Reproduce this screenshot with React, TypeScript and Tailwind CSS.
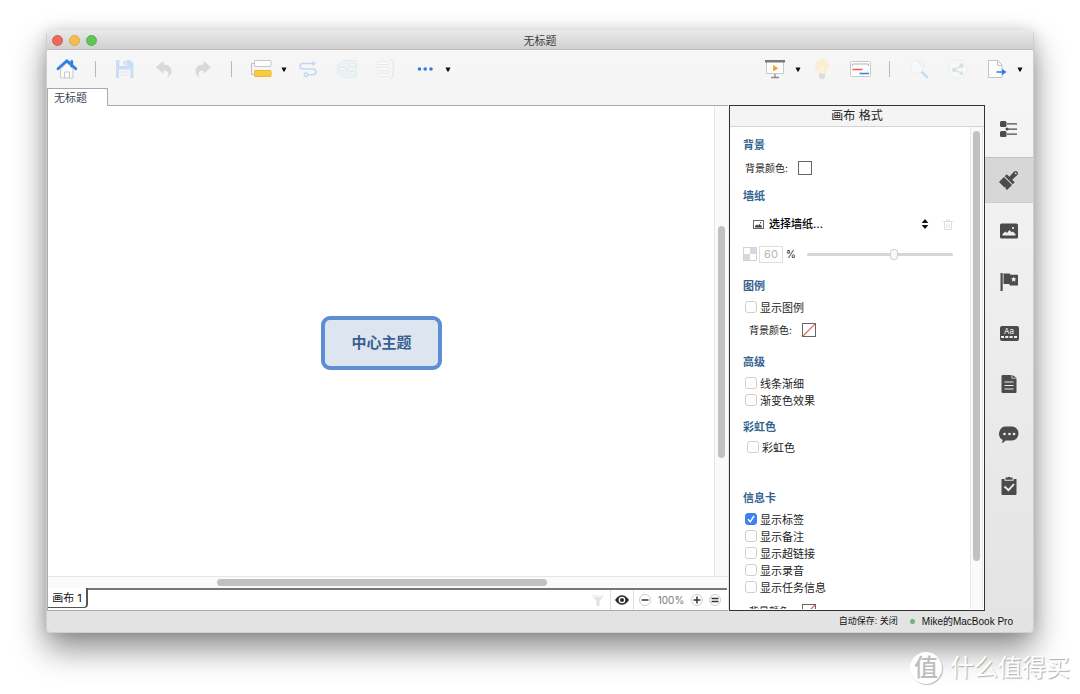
import React from 'react';

const Caret = () => (
  <svg viewBox="0 0 8 8" className="w-2 h-2" fill="#111">
    <path d="M1.500 2.500h5L4.600 6.500H3.400z" />
  </svg>
);

const HomeIcon = () => (
  <svg viewBox="0 0 22 22" className="w-[22px] h-[22px]" fill="none">
    <path d="M4.500 11v9h12.500v-9L10.800 5z" fill="#fafafa" stroke="#c9c9c9" />
    <path d="M8.500 20v-6h5v6" stroke="#c9c9c9" />
    <path d="M2 10.800L10.900 2.800L19.800 10.800M15.800 3.500v4.500" stroke="#2f7fe6" strokeWidth="2.800" strokeLinecap="round" strokeLinejoin="round" />
  </svg>
);

const SaveIcon = () => (
  <svg viewBox="0 0 20 20" className="w-5 h-5">
    <path d="M1 1h14l3.500 3.500V19H1z" fill="#cbddf4" />
    <path d="M4.500 1h7v6h-7z" fill="#f4f6f9" />
    <path d="M8.500 2h2v4h-2z" fill="#cbddf4" />
    <path d="M4 10.500h11.500V19H4z" fill="#f4f6f9" />
    <path d="M5 13h9M5 16h9" stroke="#dfe6ef" />
  </svg>
);

const UndoIcon = ({ flip = false }) => (
  <svg viewBox="0 0 20 20" className={flip ? 'w-5 h-5 -scale-x-100' : 'w-5 h-5'} fill="#d9d9d9">
    <path d="M2 8.200L9.500 1.800v3.800c4.800.1 8 2.600 8 6.600 0 2.700-1.600 4.800-4.500 6.300 1.200-1.500 1.700-3 1.300-4.700-.5-1.700-2.200-2.500-4.800-2.600v3.500z" />
  </svg>
);

const TopicIcon = () => (
  <svg viewBox="0 0 22 20" className="w-[22px] h-5" fill="none">
    <path d="M5 4.500H1.500V15.500H5" stroke="#bdbdbd" />
    <rect x="4.500" y="1.500" width="16.500" height="6" rx="0.500" fill="#fdfdfd" stroke="#c6c6c6" />
    <rect x="4.500" y="11.500" width="16.500" height="6" rx="0.500" fill="#fbcb3f" stroke="#e9ba3c" />
  </svg>
);

const RelationIcon = () => (
  <svg viewBox="0 0 20 20" className="w-5 h-5" fill="none" stroke="#c5d8f3" strokeWidth="1.500">
    <path d="M15 4.500H4.800a2.800 2.800 0 0 0 0 5.600h10.400a2.800 2.800 0 0 1 0 5.700H10" />
    <path d="M14.500 2.500L18 4.500l-3.500 2z" fill="#c5d8f3" strokeWidth="0.500" />
    <circle cx="8" cy="15.800" r="1.800" />
  </svg>
);

const BoundaryIcon = () => (
  <svg viewBox="0 0 22 20" className="w-[22px] h-5" fill="none">
    <path d="M1.500 5.500L8 1.500H20.500V18.500H8L1.500 14.500z" fill="#edf2f8" stroke="#e4ebf4" />
    <path d="M9.500 10h2l2-4H14M11.500 10l2 4H14" stroke="#dfebdf" />
    <rect x="4" y="8.500" width="5.500" height="3" rx="1" fill="#f5f8f5" stroke="#dfebdf" />
    <rect x="14" y="4.500" width="4.500" height="3" rx="1" fill="#f5f8f5" stroke="#dfebdf" />
    <rect x="14" y="12.500" width="4.500" height="3" rx="1" fill="#f5f8f5" stroke="#dfebdf" />
  </svg>
);

const SummaryIcon = () => (
  <svg viewBox="0 0 20 20" className="w-5 h-5" fill="#fafafa" stroke="#ebebeb">
    <rect x="1" y="2.500" width="12" height="3" rx="1" />
    <rect x="1" y="8.500" width="12" height="3" rx="1" />
    <rect x="1" y="14.500" width="12" height="3" rx="1" />
    <path d="M14 1h1.500q1.500 0 1.500 1.500V8q0 1.500 2 2q-2 .5-2 2v5.500q0 1.500-1.500 1.500H14" fill="none" stroke="#dae7da" />
  </svg>
);

const DotsIcon = () => (
  <svg viewBox="0 0 20 20" className="w-5 h-5" fill="#2f7de1">
    <circle cx="4.500" cy="10" r="1.800" />
    <circle cx="10.200" cy="10" r="1.800" />
    <circle cx="16" cy="10" r="1.800" />
  </svg>
);

const PresentIcon = () => (
  <svg viewBox="0 0 20 20" className="w-5 h-5" fill="none">
    <path d="M1.500 3v11.500h17V3" fill="#fdfdfd" stroke="#c8c8c8" />
    <path d="M0 1h20v2.500H0z" fill="#7a7a7a" />
    <path d="M8.200 6v6.500l5-3.200z" fill="#f2a02c" />
    <path d="M10 15v3M6 18.500h8" stroke="#8a8a8a" strokeWidth="1.300" />
  </svg>
);

const BulbIcon = () => (
  <svg viewBox="0 0 20 22" className="w-5 h-[22px]">
    <path d="M10 1a7 7 0 0 0-7 7c0 3.200 3 4.500 3.800 7.500h6.400C14 12.500 17 11.200 17 8a7 7 0 0 0-7-7z" fill="#faefd2" />
    <path d="M9 15V9M11 15V9" stroke="#fdf7e6" />
    <path d="M6.800 15.500h6.400v3.500L11.500 21h-3l-1.700-2z" fill="#dddddb" />
  </svg>
);

const GanttIcon = () => (
  <svg viewBox="0 0 22 20" className="w-[22px] h-5" fill="none">
    <rect x="0.500" y="2.500" width="20" height="15" rx="1" fill="#fdfdfd" stroke="#c9c9c9" />
    <path d="M2.500 7V5h16v2" stroke="#b5b5b5" />
    <path d="M2.500 10.500h10" stroke="#ee5b4c" strokeWidth="1.600" />
    <path d="M9.500 14.500h9.500" stroke="#2f7ff0" strokeWidth="1.600" />
  </svg>
);

const SearchIcon = () => (
  <svg viewBox="0 0 20 20" className="w-5 h-5" fill="none">
    <circle cx="8" cy="8" r="6.700" fill="#f8f9fa" stroke="#e9ebee" />
    <path d="M8 3.500a4.500 4.500 0 0 1 4.500 4.500" stroke="#e9ebee" />
    <path d="M13.500 13.500l4.500 4.700" stroke="#c3dbf8" strokeWidth="2.400" strokeLinecap="round" />
  </svg>
);

const ShareIcon = () => (
  <svg viewBox="0 0 20 20" className="w-5 h-5" fill="none">
    <circle cx="10" cy="10" r="9.300" fill="#f8f8f8" stroke="#ececec" />
    <path d="M13.500 6.500L6.500 11l7 3" stroke="#d3e5d3" strokeWidth="1.200" />
    <g fill="#d3e5d3">
      <circle cx="13.500" cy="6.500" r="2.300" />
      <circle cx="6.300" cy="11" r="2.300" />
      <circle cx="13.500" cy="14.200" r="1.900" />
    </g>
  </svg>
);

const ExportIcon = () => (
  <svg viewBox="0 0 20 20" className="w-5 h-5" fill="none">
    <path d="M1.500 1.500h9.500l4 4.500v12.500H1.500z" fill="#fdfdfd" stroke="#c2c2c2" />
    <path d="M10.500 1.500v5H15" stroke="#c2c2c2" />
    <path d="M9.500 13h7" stroke="#2f7de6" strokeWidth="1.600" />
    <path d="M15 9.800l4.500 3.200-4.500 3.200z" fill="#2f7de6" />
  </svg>
);

const side = 'w-5 h-5';

const sideItems = [
  {
    name: '大纲',
    icon: (
      <svg viewBox="0 0 20 20" className={side} fill="#4b4b4b">
        <rect x="1" y="2" width="6.500" height="6" rx="1.500" />
        <rect x="1" y="12" width="6.500" height="6" rx="1.500" />
        <circle cx="8" cy="10" r="1.500" />
        <path d="M8 4.300h10v1.300H8zM9 9.400h9v1.300H9zM8 14.500h10v1.300H8z" />
      </svg>
    ),
  },
  {
    name: '格式',
    icon: (
      <svg viewBox="0 0 20 20" className={side} fill="#4b4b4b">
        <g transform="rotate(45 10 10)">
          <path d="M8 7.500L7.600 1Q7.700-1.800 10-1.800T12.400 1L12 7.500h2.800q.9 0 .9.900v2H4.300v-2q0-.9.900-.9z" />
          <path d="M4.300 11.400h11.400v7.100h-2.500l-.5-1.800-.6 1.800H4.300z" />
          <circle cx="10" cy="0.500" r="0.900" fill="#d7d7d7" />
        </g>
      </svg>
    ),
  },
  {
    name: '图片',
    icon: (
      <svg viewBox="0 0 20 20" className={side}>
        <rect x="1" y="2.500" width="18" height="15" rx="1.500" fill="#4b4b4b" />
        <path d="M3.500 14.500v-1.500l3-2.500 1.500 1.500 2.500-3 2 2.200 1.300-.8 2.700 2.500v1.600z" fill="#f0f0f0" />
        <circle cx="14" cy="7" r="1.100" fill="#f0f0f0" />
      </svg>
    ),
  },
  {
    name: '图标',
    icon: (
      <svg viewBox="0 0 20 20" className={side}>
        <path d="M1.500 1h2.200v18H1.500z" fill="#4b4b4b" />
        <path d="M4.500 1.500h5.500q1.500 0 1.500 1.200H19v10.800h-8.500V12h-6z" fill="#4b4b4b" />
        <path d="M14.700 4.500l.8 1.800 1.900.2-1.400 1.300.4 1.900-1.700-1-1.700 1 .4-1.900L12 6.500l1.900-.2z" fill="#f0f0f0" />
      </svg>
    ),
  },
  {
    name: '标签',
    icon: (
      <span className="flex flex-col items-center w-[19px] h-[15px] rounded-xs bg-[#4b4b4b] text-[#f0f0f0]">
        <span className="text-[8px] leading-[10px]">Aa</span>
        <svg viewBox="0 0 16 2" className="w-4 h-0.5" fill="#f0f0f0">
          <path d="M0 0h3v2H0zM4.300 0h3v2h-3zM8.600 0h3v2h-3zM13 0h3v2h-3z" />
        </svg>
      </span>
    ),
  },
  {
    name: '备注',
    icon: (
      <svg viewBox="0 0 20 20" className={side}>
        <path d="M4 1h8.500v3.500H17.500V18q0 1-1 1H4q-1.500 0-1.500-1V2Q2.500 1 4 1z" fill="#4b4b4b" />
        <path d="M13.300 1L17.500 3.800h-4.200z" fill="#4b4b4b" />
        <path d="M5.500 8h9M5.500 11.500h9M5.500 15h9" stroke="#eee" strokeWidth="1.200" />
      </svg>
    ),
  },
  {
    name: '评论',
    icon: (
      <svg viewBox="0 0 20 20" className={side}>
        <path d="M7.500 1.500h5.500a6.500 7 0 0 1 0 14H6.500Q5 17.500 2.500 18q1.200-1.500 1.200-3A7 7.200 0 0 1 7.500 1.500z" fill="#4b4b4b" />
        <g fill="#eee">
          <circle cx="5.500" cy="9" r="1.300" />
          <circle cx="10.500" cy="9" r="1.300" />
          <circle cx="15" cy="9" r="1.300" />
        </g>
      </svg>
    ),
  },
  {
    name: '任务',
    icon: (
      <svg viewBox="0 0 20 20" className={side}>
        <path d="M2.500 3h3v1.800h9V3h3V18q0 1-1 1h-13q-1 0-1-1z" fill="#4b4b4b" />
        <path d="M6.500 1.500h2q1.500-1.500 3 0h2v2.300h-7z" fill="#4b4b4b" />
        <path d="M5.500 10.500l4 3.700 5.500-6" fill="none" stroke="#eee" strokeWidth="1.800" />
      </svg>
    ),
  },
];

type ToolProps = { label: string; caret?: boolean; children: React.ReactNode };

const Tool = ({ label, caret, children }: ToolProps) => (
  <button type="button" aria-label={label} className="flex items-center h-8">
    <span className="flex justify-center w-[39px]">{children}</span>
    {caret && <Caret />}
  </button>
);

const Separator = () => (
  <span className="flex justify-center w-[19px]">
    <span className="w-px h-4 bg-[#b8b8b8]" />
  </span>
);

const Heading = ({ className, children }: { className: string; children: React.ReactNode }) => (
  <h3 className={`text-[11px] leading-4 font-bold text-[#35658f] ${className}`}>{children}</h3>
);

const Check = ({ label, checked = false, className = 'ml-[15px]' }: { label: string; checked?: boolean; className?: string }) => (
  <label className={`flex h-[17px] gap-[3px] text-[11px] leading-[18px] text-[#222] ${className}`}>
    <span className="grid w-3 h-3 mt-0.5 *:col-start-1 *:row-start-1">
      <input
        type="checkbox"
        defaultChecked={checked}
        className="peer appearance-none w-3 h-3 rounded-[3px] border border-[#cfcfcf] bg-white checked:bg-[#3f80f3] checked:border-[#3f80f3]"
      />
      <svg viewBox="0 0 12 12" className="w-3 h-3 pointer-events-none opacity-0 peer-checked:opacity-100" fill="none" stroke="#fff" strokeWidth="1.500">
        <path d="M3 6.300l2.200 2.500L9 3" />
      </svg>
    </span>
    {label}
  </label>
);

const ColorRow = ({ none = false, className }: { none?: boolean; className: string }) => (
  <div className={`flex items-center h-4 gap-[10px] text-[10px] text-[#222] ${className}`}>
    <span>背景颜色:</span>
    <button type="button" aria-label="背景颜色" className="w-[14px] h-[14px] shrink-0 border border-[#666] bg-white">
      {none && (
        <svg viewBox="0 0 12 12" className="w-3 h-3" stroke="#f0574c" strokeWidth="1.200">
          <path d="M0 12L12 0" />
        </svg>
      )}
    </button>
  </div>
);

const FormatPanel = () => (
  <section className="flex flex-col w-64 shrink-0 border border-[#333] bg-white">
    <h2 className="h-[21px] shrink-0 border-b border-[#d4d4d4] bg-[#f4f4f4] text-center text-[12px] leading-5 text-[#222]">画布 格式</h2>
    <div className="flex flex-1 min-h-0 pb-px">
      <div className="flex-1 overflow-hidden pt-[10px]">
        <Heading className="ml-[13px]">背景</Heading>
        <ColorRow className="ml-[15px] mt-[7px]" />
        <Heading className="ml-[13px] mt-3">墙纸</Heading>
        <div className="flex items-center h-5 mt-[10px] ml-[23px] mr-[17px]">
          <svg viewBox="0 0 11 11" className="w-[11px] h-[11px] shrink-0" fill="none">
            <rect x="0.500" y="1.500" width="10" height="8" stroke="#666" />
            <path d="M2 8.500V7l2-1.500L5 6.500 6.500 5 9 7.500v1z" fill="#444" />
            <circle cx="7.500" cy="3.700" r="0.700" fill="#444" />
          </svg>
          <select aria-label="墙纸" className="flex-1 min-w-0 h-5 ml-[5px] appearance-none bg-transparent text-[11px] font-medium text-black">
            <option>选择墙纸...</option>
          </select>
          <svg viewBox="0 0 8 10" className="w-2 h-2.5 mr-[14px]" fill="#111">
            <path d="M4 0l3.300 4H.7zM4 10l3.300-4H.7z" />
          </svg>
          <button type="button" aria-label="删除墙纸">
            <svg viewBox="0 0 10 11" className="w-2.5 h-[11px]" fill="none" stroke="#dedede">
              <path d="M0 2.500h10M3.500 2V1h3v1M1.500 3v7.500h7V3M3.800 4.500v4.500M6.200 4.500v4.500" />
            </svg>
          </button>
        </div>
        <div className="flex items-center h-5 mt-[10px] ml-[13px] mr-[17px] text-[11px] text-[#222]">
          <svg viewBox="0 0 14 14" className="w-[14px] h-[14px] shrink-0">
            <rect x="0.500" y="0.500" width="13" height="13" fill="#fff" stroke="#d3d1da" />
            <path d="M7 1h6v6H7zM1 7h6v6H1z" fill="#d9d7df" />
          </svg>
          <input
            aria-label="不透明度"
            defaultValue="60"
            disabled
            className="w-6 h-[17px] ml-[2px] border border-[#dedede] text-center text-[11px] text-[#b5b5b5]"
          />
          <span className="w-6 pl-[3px] text-[10px]">%</span>
          <input
            type="range"
            aria-label="不透明度滑块"
            defaultValue={60}
            className="flex-1 min-w-0 h-[3px] appearance-none rounded-full bg-[#d6d6d6] [&::-webkit-slider-thumb]:appearance-none [&::-webkit-slider-thumb]:w-2 [&::-webkit-slider-thumb]:h-[11px] [&::-webkit-slider-thumb]:rounded-[3px] [&::-webkit-slider-thumb]:border [&::-webkit-slider-thumb]:border-solid [&::-webkit-slider-thumb]:border-[#cfcfcf] [&::-webkit-slider-thumb]:bg-[#f8f8f8]"
          />
        </div>
        <Heading className="ml-[13px] mt-[14px]">图例</Heading>
        <div className="mt-[5px]">
          <Check label="显示图例" />
        </div>
        <ColorRow none className="ml-[19px] mt-1.5" />
        <Heading className="ml-[13px] mt-4">高级</Heading>
        <div className="mt-[5px]">
          <Check label="线条渐细" />
          <Check label="渐变色效果" />
        </div>
        <Heading className="ml-[13px] mt-2.5">彩虹色</Heading>
        <div className="mt-1">
          <Check label="彩虹色" className="ml-[17px]" />
        </div>
        <Heading className="ml-[13px] mt-[34px]">信息卡</Heading>
        <div className="mt-[5px]">
          <Check label="显示标签" checked />
          <Check label="显示备注" />
          <Check label="显示超链接" />
          <Check label="显示录音" />
          <Check label="显示任务信息" />
        </div>
        <ColorRow none className="ml-[19px] mt-[7px]" />
      </div>
      <div className="flex justify-center w-[13px] mr-px border-x border-[#e8e8e8] bg-[#fafafa] pt-1">
        <div className="w-[7px] h-[90%] rounded-full bg-[#c1c1c1]" />
      </div>
    </div>
  </section>
);

const Round = ({ label, d }: { label: string; d: string }) => (
  <button type="button" aria-label={label} className="flex items-center justify-center w-3 h-3 rounded-full border border-[#ccc]">
    <svg viewBox="0 0 10 10" className="w-2.5 h-2.5 shrink-0" stroke="#333" strokeWidth="1.500">
      <path d={d} />
    </svg>
  </button>
);

const CanvasPane = () => (
  <main className="flex flex-col flex-1 min-w-0 mt-px mr-px border-b border-l border-[#aaa] bg-white">
    <div className="flex flex-1 min-h-0">
      <div className="flex flex-1 items-center justify-center pt-[3px] pl-px">
        <button type="button" className="w-[121px] h-[54px] rounded-[9px] border-4 border-[#5d8dd2] bg-[#dde5f1] pt-0.5 text-[15px] font-bold text-[#3a608f]">
          中心主题
        </button>
      </div>
      <div className="flex flex-col items-center w-[14px] border-l border-[#e6e6e6] bg-[#fafafa] pt-[120px]">
        <div className="w-[7px] h-[232px] rounded-full bg-[#c1c1c1]" />
      </div>
    </div>
    <div className="flex items-center h-3 border-t border-[#e6e6e6] bg-[#fafafa] pl-[169px]">
      <div className="w-[330px] h-[7px] rounded-full bg-[#c1c1c1]" />
    </div>
    <div className="flex h-[22px] pr-px">
      <button type="button" className="w-10 h-5 shrink-0 rounded-br border-b border-r-2 border-[#555] text-[11px] leading-[18px] text-[#111]">画布 1</button>
      <div className="flex flex-1 items-center justify-end border-t-2 border-[#777] pr-1.5 text-[#777]">
        <button type="button" aria-label="筛选" className="px-1.5">
          <svg viewBox="0 0 12 12" className="w-3 h-3" fill="#e2e2e2">
            <path d="M0 1.500h12L7.500 7v5h-3V7z" />
            <ellipse cx="6" cy="2.200" rx="4.500" ry="1" fill="#f6f6f6" />
          </svg>
        </button>
        <button type="button" aria-label="显示" className="flex items-center h-full px-1 border-x border-[#e0e0e0]">
          <svg viewBox="0 0 14 10" className="w-[14px] h-2.5">
            <path d="M0 5Q3 .2 7 .2T14 5Q11 9.800 7 9.800T0 5z" fill="#2b2b2b" />
            <circle cx="7" cy="5" r="3.300" fill="#fff" />
            <circle cx="7" cy="5" r="2" fill="#2b2b2b" />
          </svg>
        </button>
        <span className="w-[5px]" />
        <Round label="缩小" d="M1.500 5h7" />
        <span className="w-10 text-center text-[10px]">100%</span>
        <Round label="放大" d="M1.500 5h7M5 1.500v7" />
        <span className="w-1.5" />
        <Round label="实际大小" d="M1.500 3.500h7M1.500 6.500h7" />
      </div>
    </div>
  </main>
);

export default function App() {
  return (
    <div className="relative flex h-screen overflow-hidden bg-white px-[46px] pt-[30px] pb-[61px] font-[Inter,'Noto_Sans_CJK_SC',sans-serif]">
      <div className="flex flex-col flex-1 min-w-0 overflow-hidden rounded-[5px] border-x border-b border-[#cfcfcf] bg-linear-to-b from-[#f7f7f7] to-[#e3e3e3] shadow-[0_16px_32px_rgba(0,0,0,0.45),0_0_14px_rgba(0,0,0,0.12)]">
        <header className="grid grid-cols-[1fr_auto_1fr] items-center h-5 shrink-0 border-b border-[#bdbdbd] bg-linear-to-b from-[#eaeaea] to-[#d0d0d0]">
          <div className="flex gap-1.5 pl-[5px]">
            <button type="button" aria-label="关闭" className="w-[11px] h-[11px] rounded-full border border-[#dd5c51] bg-[#ec695e]" />
            <button type="button" aria-label="最小化" className="w-[11px] h-[11px] rounded-full border border-[#dfa73f] bg-[#f4bf4f]" />
            <button type="button" aria-label="缩放" className="w-[11px] h-[11px] rounded-full border border-[#55b349] bg-[#61c554]" />
          </div>
          <h1 className="pt-px text-[11px] leading-5 text-[#3c3c3c]">无标题</h1>
        </header>

        <nav className="flex items-center justify-between h-[38px] shrink-0 pr-[9px] pb-px">
          <div className="flex items-center">
            <Tool label="主页"><HomeIcon /></Tool>
            <Separator />
            <Tool label="保存"><SaveIcon /></Tool>
            <Tool label="撤销"><UndoIcon /></Tool>
            <Tool label="重做"><UndoIcon flip /></Tool>
            <Separator />
            <Tool label="主题" caret><TopicIcon /></Tool>
            <Tool label="联系"><RelationIcon /></Tool>
            <Tool label="外框"><BoundaryIcon /></Tool>
            <Tool label="概要"><SummaryIcon /></Tool>
            <Tool label="更多" caret><DotsIcon /></Tool>
          </div>
          <div className="flex items-center">
            <Tool label="演示" caret><PresentIcon /></Tool>
            <Tool label="头脑风暴"><BulbIcon /></Tool>
            <Tool label="甘特图"><GanttIcon /></Tool>
            <Separator />
            <Tool label="搜索"><SearchIcon /></Tool>
            <Tool label="分享"><ShareIcon /></Tool>
            <Tool label="导出" caret><ExportIcon /></Tool>
          </div>
        </nav>

        <div className="flex h-[18px] shrink-0 pr-[305px]">
          <button type="button" className="w-[61px] shrink-0 border-x border-t border-[#aaa] bg-white pl-1.5 text-left text-[11px] leading-4 text-[#3b4556]">无标题</button>
          <div className="flex-1 border-b border-[#aaa]" />
        </div>

        <div className="flex flex-1 min-h-0 -mt-px">
          <CanvasPane />
          <FormatPanel />
          <aside className="flex flex-col gap-[5px] w-12 shrink-0 pt-px">
            {sideItems.map((item, index) => (
              <button
                key={item.name}
                type="button"
                aria-label={item.name}
                className={`flex items-center justify-center h-[46px] shrink-0 ${index === 1 ? 'border-y border-t-[#c4c4c4] border-b-[#cdcdcd] bg-[#d7d7d7]' : ''}`}
              >
                {item.icon}
              </button>
            ))}
          </aside>
        </div>

        <footer className="flex items-center justify-end h-[21px] shrink-0 pr-5 font-['Liberation_Sans','Noto_Sans_CJK_SC',sans-serif] text-[10px] text-[#111]">
          <span className="text-[9px]">自动保存: 关闭</span>
          <span className="w-[5px] h-[5px] ml-3 mr-[7px] rounded-full bg-[#77b077]" />
          <span>Mike的MacBook Pro</span>
        </footer>
      </div>

      <div className="absolute right-[10px] bottom-2 flex items-center gap-2">
        <span className="flex items-center justify-center w-8 h-8 rounded-full bg-white text-[24px] leading-8 font-medium text-[#bdbdbd] shadow-[1px_1px_1px_#bbb]">值</span>
        <span className="text-[24px] leading-9 text-white [text-shadow:1px_1px_1px_#aaa]">什么值得买</span>
      </div>
    </div>
  );
}
